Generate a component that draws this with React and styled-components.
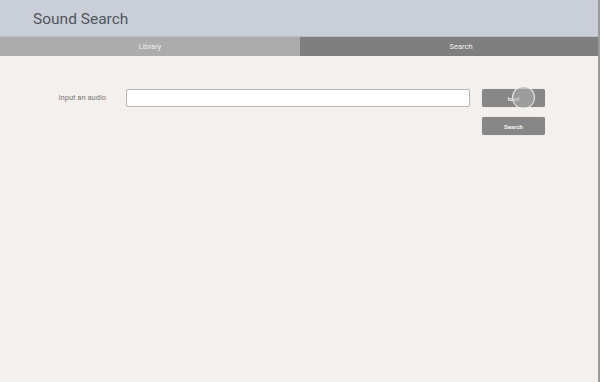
import React from "react";
import styled, { createGlobalStyle } from "styled-components";

const GlobalStyle = createGlobalStyle`
  html, body {
    margin: 0;
    padding: 0;
    background: #f4f0ed;
  }
  body {
    font-family: Roboto, "Liberation Sans", sans-serif;
    -webkit-font-smoothing: antialiased;
  }
`;

const Page = styled.div`
  width: 598px;
  height: 382px;
  border-right: 2px solid #9a9a9a;
  background: #f4f0ed;
  display: flex;
  flex-direction: column;
`;

const Header = styled.header`
  height: 37px;
  background: #c9ced9;
  display: flex;
  align-items: center;
  padding-left: 33px;
  padding-top: 1px;
  border-bottom: 1px solid #b9bdc6;
  box-sizing: border-box;
`;

const Title = styled.h1`
  margin: 0;
  font-size: 15.5px;
  font-weight: 400;
  color: #52565c;
`;

const Tabs = styled.nav`
  display: flex;
  height: 19px;
`;

const Tab = styled.div`
  width: ${(props) => (props.active ? "298px" : "300px")};
  display: flex;
  align-items: center;
  justify-content: center;
  box-sizing: border-box;
  padding-left: ${(props) => (props.active ? "24px" : "0")};
  background: ${(props) => (props.active ? "#7f7f7f" : "#acacac")};
  color: #eeeeee;
  font-size: 7.5px;
`;

const Content = styled.main`
  display: flex;
  padding-top: 33px;
  gap: 12px;
`;

const Label = styled.label`
  width: 106px;
  text-align: right;
  font-size: 7.5px;
  color: #777;
  line-height: 17px;
  margin-right: 8px;
`;

const Input = styled.input`
  width: 344px;
  height: 18px;
  box-sizing: border-box;
  border: 1px solid #b5b5b5;
  border-radius: 2px;
  background: #fff;
  outline: none;
`;

const Buttons = styled.div`
  display: flex;
  flex-direction: column;
  gap: 10px;
`;

const Button = styled.button`
  position: relative;
  width: 63px;
  height: 18px;
  border: none;
  border-radius: 2px;
  background: #878787;
  color: #f2f2f2;
  font-family: Roboto, "Liberation Sans", sans-serif;
  font-size: 6px;
  font-weight: 700;
  padding: 0;
  box-shadow: 0 0 1px rgba(0, 0, 0, 0.25);
  overflow: visible;
`;

const Ripple = styled.span`
  position: absolute;
  left: 30px;
  top: -3px;
  width: 23px;
  height: 23px;
  border-radius: 50%;
  background: rgba(170, 170, 170, 0.6);
  border: 1px solid rgba(255, 255, 255, 0.75);
  box-sizing: border-box;
`;

export default function App() {
  return (
    <>
      <GlobalStyle />
      <Page>
        <Header>
          <Title>Sound Search</Title>
        </Header>
        <Tabs>
          <Tab>Library</Tab>
          <Tab active>Search</Tab>
        </Tabs>
        <Content>
          <Label>Input an audio</Label>
          <Input type="text" />
          <Buttons>
            <Button>
              <Ripple />
              load
            </Button>
            <Button>Search</Button>
          </Buttons>
        </Content>
      </Page>
    </>
  );
}
